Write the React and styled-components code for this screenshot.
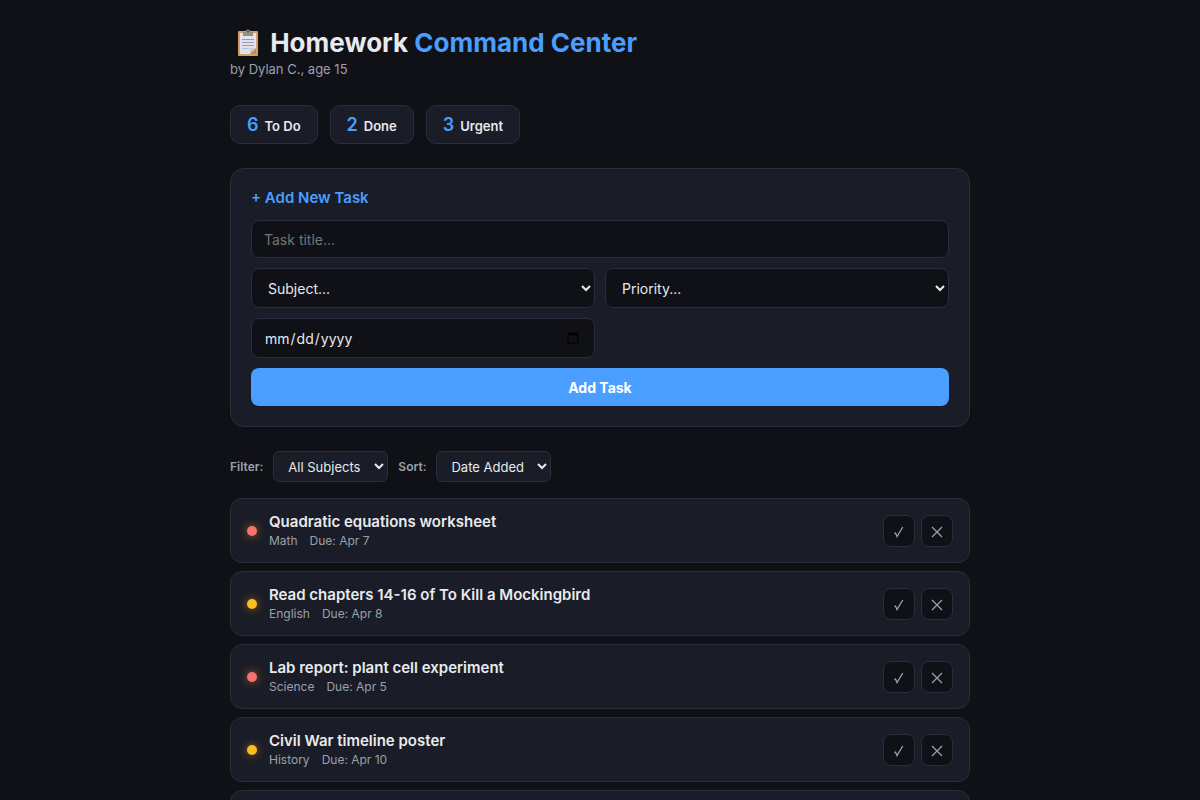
import React, { useState } from "react";
import styled, { createGlobalStyle } from "styled-components";

const GlobalStyle = createGlobalStyle`
  * {
    box-sizing: border-box;
    margin: 0;
    padding: 0;
  }

  body {
    background: #0f1117;
    color: #e8eaed;
    font-family: Inter, sans-serif;
  }
`;

const Container = styled.main`
  margin: 0 auto;
  max-width: 780px;
  padding: 28px 20px;
`;

const Header = styled.header`
  margin-bottom: 28px;
`;

const Title = styled.h1`
  font-size: 26px;
  font-weight: 700;
  line-height: 29px;
`;

const Accent = styled.span`
  color: #4a9eff;
`;

const ClipboardSvg = styled.svg`
  height: 28px;
  vertical-align: -5px;
  width: 34px;
`;

const Byline = styled.p`
  color: #9aa0ac;
  font-size: 13px;
  line-height: 16px;
  margin-top: 4px;
`;

const Stats = styled.div`
  display: flex;
  flex-wrap: wrap;
  gap: 12px;
  margin-bottom: 24px;
`;

const Stat = styled.div`
  align-items: baseline;
  background: #1a1d27;
  border: 1px solid #2a2d3a;
  border-radius: 10px;
  display: flex;
  font-size: 13px;
  font-weight: 600;
  gap: 6px;
  line-height: 21px;
  padding: 8px 16px;
`;

const StatCount = styled.span`
  color: #4a9eff;
  font-size: 18px;
`;

const StatLabel = styled.span`
  line-height: 16px;
`;

const Form = styled.form`
  background: #1a1d27;
  border: 1px solid #2a2d3a;
  border-radius: 14px;
  margin-bottom: 24px;
  padding: 20px;
`;

const FormTitle = styled.h2`
  color: #4a9eff;
  font-size: 15px;
  font-weight: 600;
  line-height: 18px;
  margin-bottom: 13px;
`;

const Fields = styled.div`
  display: grid;
  gap: 10px;
  grid-template-columns: 1fr 1fr;
`;

const Input = styled.input`
  background: #0f1117;
  border: 1px solid #2a2d3a;
  border-radius: 8px;
  color: #e8eaed;
  font-family: inherit;
  font-size: 14px;
  grid-column: ${({ $wide }) => ($wide ? "1 / -1" : "auto")};
  height: ${({ $wide }) => ($wide ? "38px" : "40px")};
  padding: 10px 12px;
  width: 100%;
`;

const Select = styled.select`
  background: #0f1117;
  border: 1px solid #2a2d3a;
  border-radius: 8px;
  color: #e8eaed;
  font-family: inherit;
  font-size: 14px;
  height: 40px;
  padding: 10px 12px;
  width: 100%;
`;

const SubmitButton = styled.button`
  background: #4a9eff;
  border: none;
  border-radius: 8px;
  color: #fff;
  cursor: pointer;
  font-family: inherit;
  font-size: 14px;
  font-weight: 700;
  grid-column: 1 / -1;
  height: 38px;
`;

const Controls = styled.div`
  align-items: center;
  display: flex;
  flex-wrap: wrap;
  gap: 10px;
  margin-bottom: 16px;
`;

const ControlLabel = styled.label`
  color: #9aa0ac;
  font-size: 12px;
  font-weight: 600;
`;

const ControlSelect = styled.select`
  background: #1a1d27;
  border: 1px solid #2a2d3a;
  border-radius: 6px;
  color: #e8eaed;
  font-family: inherit;
  font-size: 13px;
  height: 31px;
  padding: 6px 10px;
`;

const TaskList = styled.ul`
  display: flex;
  flex-direction: column;
  gap: 8px;
  list-style: none;
`;

const TaskItem = styled.li`
  align-items: center;
  background: #1a1d27;
  border: 1px solid #2a2d3a;
  border-radius: 12px;
  display: flex;
  gap: 12px;
  padding: 14px 16px;
`;

const Dot = styled.span`
  background: ${({ $priority }) =>
    $priority === "high" ? "#f87171" : "#fbbf24"};
  border-radius: 50%;
  box-shadow: 0 0 8px rgba(255, 150, 30, 0.6);
  flex-shrink: 0;
  height: 10px;
  width: 10px;
`;

const TaskBody = styled.div`
  flex: 1;
`;

const TaskTitle = styled.div`
  font-size: 15px;
  font-weight: 600;
  line-height: 18px;
  margin-bottom: 2px;
`;

const TaskMeta = styled.div`
  color: #9aa0ac;
  display: flex;
  font-size: 12px;
  gap: 12px;
  line-height: 15px;
`;

const Actions = styled.div`
  display: flex;
  gap: 6px;
`;

const IconButton = styled.button`
  align-items: center;
  background: #0f1117;
  border: 1px solid #2a2d3a;
  border-radius: 8px;
  color: #9aa0ac;
  cursor: pointer;
  display: flex;
  height: 32px;
  justify-content: center;
  width: 32px;
`;

const ClipboardIcon = () => (
  <ClipboardSvg viewBox="0 0 34 28" aria-hidden="true">
    <rect x="8" y="2" width="20" height="25" rx="1" fill="#d3a163" />
    <path d="M10 4h16v15l-6 6H10z" fill="#e4e2ee" />
    <path d="M26 19v6h-6z" fill="#c08d4f" />
    <path d="M26 19l-6 6v-5a1 1 0 0 1 1-1z" fill="#c9c6d6" />
    <path d="M13 3h2.500a2.500 2.500 0 0 1 5 0H23v4H13z" fill="#8f9186" />
    <circle cx="18" cy="2.600" r="1" fill="#4b4a48" />
    <path
      d="M12 10.500h12M12 13.500h12M12 16.500h12"
      stroke="#9a9db0"
      strokeWidth="1.200"
    />
    <path d="M12 19.500h7" stroke="#bdbccb" strokeWidth="1.200" />
  </ClipboardSvg>
);

const CheckIcon = () => (
  <svg
    width="14"
    height="14"
    viewBox="0 0 14 14"
    fill="none"
    stroke="currentColor"
    strokeWidth="1.3"
  >
    <path d="M2.300 9.500l1.200-.4 1.500 3.400L10.800 3" />
  </svg>
);

const CrossIcon = () => (
  <svg
    width="14"
    height="14"
    viewBox="0 0 14 14"
    fill="none"
    stroke="currentColor"
    strokeWidth="1.3"
  >
    <path d="M2 3l10 10M12 3L2 13" />
  </svg>
);

const stats = [
  { label: "To Do", count: 6 },
  { label: "Done", count: 2 },
  { label: "Urgent", count: 3 },
];

const subjects = ["Math", "English", "Science", "History"];

const initialTasks = [
  {
    id: 1,
    title: "Quadratic equations worksheet",
    subject: "Math",
    due: "Apr 7",
    priority: "high",
  },
  {
    id: 2,
    title: "Read chapters 14-16 of To Kill a Mockingbird",
    subject: "English",
    due: "Apr 8",
    priority: "medium",
  },
  {
    id: 3,
    title: "Lab report: plant cell experiment",
    subject: "Science",
    due: "Apr 5",
    priority: "high",
  },
  {
    id: 4,
    title: "Civil War timeline poster",
    subject: "History",
    due: "Apr 10",
    priority: "medium",
  },
  {
    id: 5,
    title: "Geometry practice problems",
    subject: "Math",
    due: "Apr 11",
    priority: "medium",
  },
];

const Task = ({ task, onRemove }) => (
  <TaskItem>
    <Dot $priority={task.priority} />
    <TaskBody>
      <TaskTitle>{task.title}</TaskTitle>
      <TaskMeta>
        <span>{task.subject}</span>
        <span>Due: {task.due}</span>
      </TaskMeta>
    </TaskBody>
    <Actions>
      <IconButton type="button" aria-label="Mark done" onClick={onRemove}>
        <CheckIcon />
      </IconButton>
      <IconButton type="button" aria-label="Delete" onClick={onRemove}>
        <CrossIcon />
      </IconButton>
    </Actions>
  </TaskItem>
);

const App = () => {
  const [tasks, setTasks] = useState(initialTasks);
  const [filter, setFilter] = useState("All Subjects");

  const visible = tasks.filter(
    (task) => filter === "All Subjects" || task.subject === filter
  );

  return (
    <>
      <GlobalStyle />
      <Container>
        <Header>
          <Title>
            <ClipboardIcon /> Homework <Accent>Command Center</Accent>
          </Title>
          <Byline>by Dylan C., age 15</Byline>
        </Header>
        <Stats>
          {stats.map(({ label, count }) => (
            <Stat key={label}>
              <StatCount>{count}</StatCount>
              <StatLabel>{label}</StatLabel>
            </Stat>
          ))}
        </Stats>
        <Form onSubmit={(e) => e.preventDefault()}>
          <FormTitle>+ Add New Task</FormTitle>
          <Fields>
            <Input
              $wide
              type="text"
              placeholder="Task title..."
              aria-label="Task title"
            />
            <Select aria-label="Subject">
              <option>Subject...</option>
              {subjects.map((subject) => (
                <option key={subject}>{subject}</option>
              ))}
            </Select>
            <Select aria-label="Priority">
              <option>Priority...</option>
              <option>High</option>
              <option>Medium</option>
              <option>Low</option>
            </Select>
            <Input type="date" aria-label="Due date" />
            <SubmitButton type="submit">Add Task</SubmitButton>
          </Fields>
        </Form>
        <Controls>
          <ControlLabel htmlFor="filter">Filter:</ControlLabel>
          <ControlSelect
            id="filter"
            value={filter}
            onChange={(e) => setFilter(e.target.value)}
          >
            <option>All Subjects</option>
            {subjects.map((subject) => (
              <option key={subject}>{subject}</option>
            ))}
          </ControlSelect>
          <ControlLabel htmlFor="sort">Sort:</ControlLabel>
          <ControlSelect id="sort">
            <option>Date Added</option>
            <option>Due Date</option>
            <option>Priority</option>
          </ControlSelect>
        </Controls>
        <TaskList>
          {visible.map((task) => (
            <Task
              key={task.id}
              task={task}
              onRemove={() => setTasks(tasks.filter((t) => t.id !== task.id))}
            />
          ))}
        </TaskList>
      </Container>
    </>
  );
};

export default App;
